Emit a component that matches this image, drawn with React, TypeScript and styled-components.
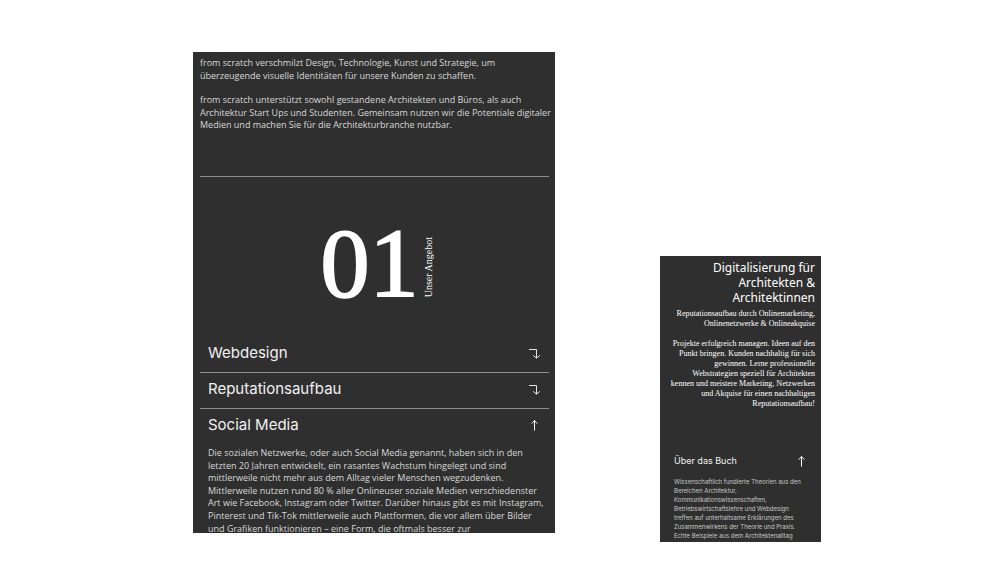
import React from "react";
import styled, { createGlobalStyle } from "styled-components";

const GlobalStyle = createGlobalStyle`
  * { box-sizing: border-box; }
  body { margin: 0; background: #fff; font-family: Inter, sans-serif; }
  h1, h2, h3, p { margin: 0; font-weight: 400; }
`;

const Page = styled.main`
  display: grid;
  grid-template-columns: 193fr 362fr 105fr 161fr 179fr;
  align-items: start;
`;

const Panel = styled.section`
  overflow: hidden;
  background: #2f2f2f;
  color: #fff;
`;

const OfferPanel = styled(Panel)`
  grid-column: 2;
  aspect-ratio: 362 / 481;
  margin-top: 52px;
  padding: 5px 6px 0 7px;
`;

const BookPanel = styled(Panel)`
  grid-column: 4;
  aspect-ratio: 161 / 286;
  margin-top: 256px;
  padding: 4px 6px 0;
`;

const Copy = styled.p<{ $gap?: boolean }>`
  margin-bottom: ${(p) => (p.$gap ? "12px" : "0")};
  color: #d8d8d8;
  font-family: "Open Sans", sans-serif;
  font-size: 9px;
  line-height: 1.4;
  white-space: nowrap;
`;

const Rule = styled.hr`
  margin: 44px 0 0;
  border: 0;
  border-top: 1px solid #8c8f8c;
`;

const Hero = styled.div`
  display: flex;
  justify-content: center;
  align-items: center;
  gap: 4px;
  height: 160px;
  padding: 20px 0 0 6px;
`;

const HeroNumber = styled.span`
  margin-bottom: 8px;
  font-family: "Liberation Serif", serif;
  font-size: 98px;
  line-height: 98px;
  -webkit-text-stroke: 2px #fff;
`;

const HeroLabel = styled.h2`
  writing-mode: vertical-rl;
  transform: rotate(180deg);
  font-family: "Liberation Serif", serif;
  font-size: 10px;
  line-height: 12px;
`;

const Entry = styled.button<{ $line?: boolean }>`
  display: flex;
  justify-content: space-between;
  align-items: center;
  width: 100%;
  height: 36px;
  padding: 0 9px 3px 8px;
  border: 0;
  border-bottom: 1px solid ${(p) => (p.$line ? "#8c8f8c" : "transparent")};
  background: none;
  color: #f2f2f2;
  font-family: Inter, sans-serif;
  font-size: 15px;
  text-align: left;
`;

const EntryBody = styled.div`
  padding: 2px 8px 0;
`;

const BookTitle = styled.h1`
  font-family: "Noto Sans", sans-serif;
  font-size: 12px;
  line-height: 15px;
  text-align: right;
`;

const BookIntro = styled.p<{ $spaced?: boolean }>`
  margin-top: ${(p) => (p.$spaced ? "10px" : "4px")};
  font-family: "Liberation Serif", serif;
  font-size: 8px;
  line-height: 10px;
  text-align: right;
  white-space: nowrap;
`;

const BookEntry = styled(Entry)`
  height: 24px;
  margin-top: 40px;
  padding: 0 8px;
  font-size: 9px;
`;

const BookCopy = styled.p`
  padding: 4px 8px 0;
  color: #c8c8c8;
  font-size: 6px;
  line-height: 9px;
  white-space: nowrap;
`;

const TurnDown = () => (
  <svg width="12" height="12" viewBox="0 0 12 12" fill="none" stroke="#e6e6e6" aria-hidden="true">
    <path d="M1 2.5H8.5V11M5.2 8.4L8.5 11.2L11.8 8.4" />
  </svg>
);

const Up = () => (
  <svg width="12" height="12" viewBox="0 0 12 12" fill="none" stroke="#fff" aria-hidden="true">
    <path d="M6.5 11.5V1.5M3.7 4.6L6.5 1.6L9.3 4.6" />
  </svg>
);

const Lines = ({ rows }: { rows: string[] }) => (
  <>
    {rows.map((row, i) => (
      <React.Fragment key={row}>
        {i > 0 && <br />}
        {row}
      </React.Fragment>
    ))}
  </>
);

export default function App() {
  return (
    <>
      <GlobalStyle />
      <Page>
        <OfferPanel>
          <Copy $gap>
            <Lines rows={["from scratch verschmilzt Design, Technologie, Kunst und Strategie, um", "überzeugende visuelle Identitäten für unsere Kunden zu schaffen."]} />
          </Copy>
          <Copy>
            <Lines rows={["from scratch unterstützt sowohl gestandene Architekten und Büros, als auch", "Architektur Start Ups und Studenten. Gemeinsam nutzen wir die Potentiale digitaler", "Medien und machen Sie für die Architekturbranche nutzbar."]} />
          </Copy>
          <Rule />
          <Hero>
            <HeroNumber>01</HeroNumber>
            <HeroLabel>Unser Angebot</HeroLabel>
          </Hero>
          <Entry $line type="button">Webdesign<TurnDown /></Entry>
          <Entry $line type="button">Reputationsaufbau<TurnDown /></Entry>
          <Entry type="button" aria-expanded="true">Social Media<Up /></Entry>
          <EntryBody>
            <Copy>
              <Lines rows={["Die sozialen Netzwerke, oder auch Social Media genannt, haben sich in den", "letzten 20 Jahren entwickelt, ein rasantes Wachstum hingelegt und sind", "mittlerweile nicht mehr aus dem Alltag vieler Menschen wegzudenken.", "Mittlerweile nutzen rund 80 % aller Onlineuser soziale Medien verschiedenster", "Art wie Facebook, Instagram oder Twitter. Darüber hinaus gibt es mit Instagram,", "Pinterest und Tik-Tok mittlerweile auch Plattformen, die vor allem über Bilder", "und Grafiken funktionieren – eine Form, die oftmals besser zur"]} />
            </Copy>
          </EntryBody>
        </OfferPanel>
        <BookPanel>
          <BookTitle>
            <Lines rows={["Digitalisierung für", "Architekten &", "Architektinnen"]} />
          </BookTitle>
          <BookIntro>
            <Lines rows={["Reputationsaufbau durch Onlinemarketing,", "Onlinenetzwerke & Onlineakquise"]} />
          </BookIntro>
          <BookIntro $spaced>
            <Lines rows={["Projekte erfolgreich managen. Ideen auf den", "Punkt bringen. Kunden nachhaltig für sich", "gewinnen. Lerne professionelle", "Webstrategien speziell für Architekten", "kennen und meistere Marketing, Netzwerken", "und Akquise für einen nachhaltigen", "Reputationsaufbau!"]} />
          </BookIntro>
          <BookEntry type="button" aria-expanded="true">Über das Buch<Up /></BookEntry>
          <BookCopy>
            <Lines rows={["Wissenschaftlich fundierte Theorien aus den", "Bereichen Architektur,", "Kommunikationswissenschaften,", "Betriebswirtschaftslehre und Webdesign", "treffen auf unterhaltsame Erklärungen des", "Zusammenwirkens der Theorie und Praxis.", "Echte Beispiele aus dem Architektenalltag"]} />
          </BookCopy>
        </BookPanel>
      </Page>
    </>
  );
}
